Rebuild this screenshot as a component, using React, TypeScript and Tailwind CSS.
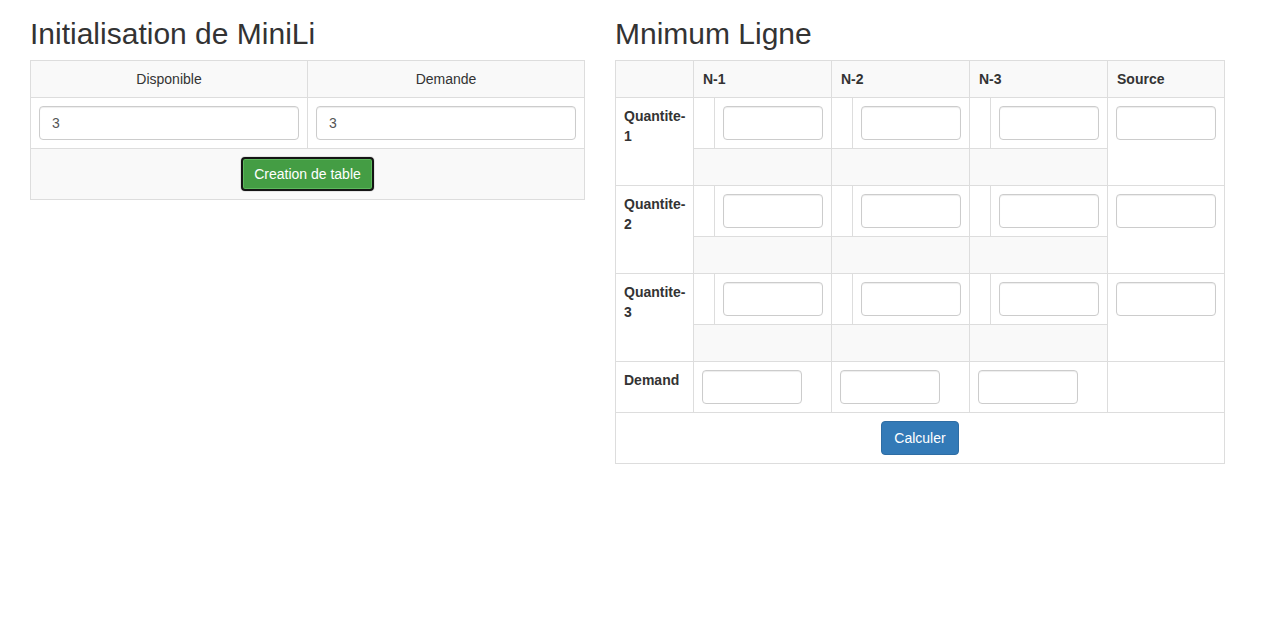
import React from 'react';

const cols = ['N-1', 'N-2', 'N-3'];
const rows = ['Quantite-1', 'Quantite-2', 'Quantite-3'];

const inputCls =
  'block h-[34px] rounded-[4px] border border-[#ccc] bg-white px-3 text-[14px] text-[#555] shadow-[inset_0_1px_1px_rgba(0,0,0,0.075)] outline-none';

function Cell({ children, className = '', colSpan }: { children?: React.ReactNode; className?: string; colSpan?: number }) {
  return (
    <td colSpan={colSpan} className={`border border-[#ddd] p-2 align-top ${className}`}>
      {children}
    </td>
  );
}

export default function App() {
  return (
    <div className="min-h-[638px] bg-white font-['Liberation_Sans',Arial,sans-serif] text-[14px] leading-[20px] text-[#333]">
      <div className="flex gap-[30px] pl-[30px]">
        {/* Left: init */}
        <div className="w-[555px]">
          <h2 className="mt-[17px] mb-[10px] text-[30px] font-medium leading-[33px]">Initialisation de MiniLi</h2>
          <table className="w-full table-fixed border-collapse border border-[#ddd]">
            <tbody>
              <tr className="bg-[#f9f9f9]">
                <Cell className="text-center">Disponible</Cell>
                <Cell className="text-center">Demande</Cell>
              </tr>
              <tr>
                <Cell>
                  <input className={`${inputCls} w-full`} defaultValue="3" />
                </Cell>
                <Cell>
                  <input className={`${inputCls} w-full`} defaultValue="3" />
                </Cell>
              </tr>
              <tr className="bg-[#f9f9f9]">
                <Cell colSpan={2} className="text-center">
                  <button className="inline-block rounded-[4px] border-2 border-[#141414] bg-[#449d44] px-[11px] py-[5px] text-[14px] leading-[20px] text-white shadow-[0_0_0_1px_#e4e4e4,inset_0_0_0_1px_#5cb85c]">
                    Creation de table
                  </button>
                </Cell>
              </tr>
            </tbody>
          </table>
        </div>

        {/* Right: minimum ligne */}
        <div className="w-[609px]">
          <h2 className="mt-[17px] mb-[10px] text-[30px] font-medium leading-[33px]">Mnimum Ligne</h2>
          <table className="w-full table-fixed border-collapse border border-[#ddd]">
            <colgroup>
              <col className="w-[78px]" />
              <col className="w-[138px]" />
              <col className="w-[138px]" />
              <col className="w-[138px]" />
              <col className="w-[117px]" />
            </colgroup>
            <thead>
              <tr className="bg-[#f9f9f9]">
                <th className="border border-[#ddd] p-2 text-left font-bold"></th>
                {cols.map((c) => (
                  <th key={c} className="border border-[#ddd] py-2 pr-2 pl-[9px] text-left font-bold">
                    {c}
                  </th>
                ))}
                <th className="border border-[#ddd] py-2 pr-2 pl-[9px] text-left font-bold">Source</th>
              </tr>
            </thead>
            <tbody>
              {rows.map((r) => (
                <tr key={r} className="h-[88px]">
                  <Cell className="font-bold">{r}</Cell>
                  {cols.map((c) => (
                    <td key={c} className="border border-[#ddd] p-0 align-top">
                      <table className="w-full border-collapse">
                        <tbody>
                          <tr>
                            <td className="w-[22px] border-r border-[#ddd]"></td>
                            <td className="p-2">
                              <input className={`${inputCls} w-[100px]`} />
                            </td>
                          </tr>
                          <tr>
                            <td colSpan={2} className="h-[36px] border-t border-[#ddd] bg-[#f9f9f9]"></td>
                          </tr>
                        </tbody>
                      </table>
                    </td>
                  ))}
                  <Cell>
                    <input className={`${inputCls} w-[100px]`} />
                  </Cell>
                </tr>
              ))}
              <tr className="h-[51px]">
                <Cell className="font-bold">Demand</Cell>
                {cols.map((c) => (
                  <Cell key={c}>
                    <input className={`${inputCls} w-[100px]`} />
                  </Cell>
                ))}
                <Cell></Cell>
              </tr>
              <tr>
                <Cell colSpan={5} className="text-center">
                  <button className="inline-block rounded-[4px] border border-[#2e6da4] bg-[#337ab7] px-3 py-[6px] text-[14px] leading-[20px] text-white">
                    Calculer
                  </button>
                </Cell>
              </tr>
            </tbody>
          </table>
        </div>
      </div>
    </div>
  );
}
